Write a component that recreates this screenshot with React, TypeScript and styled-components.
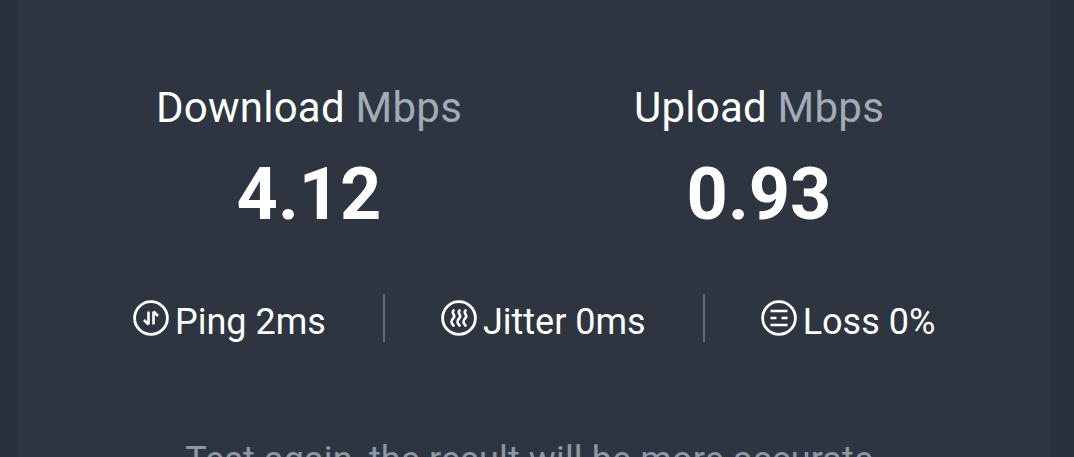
import styled, { createGlobalStyle } from "styled-components";

const GlobalStyle = createGlobalStyle`
  html, body {
    margin: 0;
    padding: 0;
    height: 457px;
    overflow: hidden;
    background: #28323e;
    font-family: "Roboto", "Liberation Sans", sans-serif;
  }
`;

const Page = styled.div`
  width: 1074px;
  height: 457px;
  overflow: hidden;
  background: #28323e;
`;

const Card = styled.section`
  width: 1032px;
  height: 457px;
  margin-left: 18px;
  padding-top: 84px;
  box-sizing: border-box;
  background: #2d3640;
`;

const Speeds = styled.div`
  display: grid;
  grid-template-columns: 450px 450px;
  padding-left: 66px;
`;

const Speed = styled.div`
  display: flex;
  flex-direction: column;
  align-items: center;
`;

const SpeedLabel = styled.div`
  font-size: 42px;
  line-height: 48px;
  letter-spacing: 0.25px;
  color: #ffffff;
  white-space: nowrap;
`;

const Unit = styled.span`
  color: #a3abb7;
`;

const SpeedValue = styled.div`
  margin-top: 21px;
  font-size: 72px;
  line-height: 84px;
  font-weight: 700;
  color: #ffffff;
`;

const Metrics = styled.div`
  display: flex;
  align-items: center;
  gap: 56px;
  margin-top: 57px;
  padding-left: 115px;
`;

const Metric = styled.div`
  display: flex;
  align-items: center;
  gap: 6px;
  height: 48px;
  padding-right: 1px;
  font-size: 36px;
  line-height: 48px;
  color: #ffffff;
  white-space: nowrap;
`;

const MetricText = styled.span`
  padding-top: 8px;
`;

const Divider = styled.div`
  width: 2px;
  height: 48px;
  background: #5f6779;
`;

const Hint = styled.p`
  margin: 96px 0 0;
  text-align: center;
  font-size: 36px;
  line-height: 44px;
  letter-spacing: 0.13px;
  color: #8f97a3;
  white-space: nowrap;
`;

const IconSvg = styled.svg`
  width: 36px;
  height: 36px;
  flex: none;
`;

function PingIcon() {
  return (
    <IconSvg viewBox="0 0 36 36" fill="none" stroke="#fff" strokeWidth="2.8">
      <circle cx="18" cy="18" r="16.4" />
      <path d="M15.500 11.500v13M15.500 24.500l-4.500-4.500M20.500 24.500v-13M20.500 11.500l4.500 4.500" strokeWidth="2.6" />
    </IconSvg>
  );
}

function JitterIcon() {
  return (
    <IconSvg viewBox="0 0 36 36" fill="none" stroke="#fff" strokeWidth="2.8">
      <circle cx="18" cy="18" r="16.4" />
      <path
        d="M12.500 10.500c-3 3 3 4.500 0 7.500s-2.500 5 0 7.500M18.500 10.500c-3 3 3 4.500 0 7.500s-2.500 5 0 7.500M24.500 10.500c-3 3 3 4.500 0 7.500s-2.500 5 0 7.500"
        strokeWidth="2.6"
        strokeLinecap="round"
      />
    </IconSvg>
  );
}

function LossIcon() {
  return (
    <IconSvg viewBox="0 0 36 36" fill="none" stroke="#fff" strokeWidth="2.8">
      <circle cx="18" cy="18" r="16.4" />
      <path d="M9.500 11h17M9.500 18h6M20.500 18h6M9.500 25h17" strokeWidth="2.6" />
    </IconSvg>
  );
}

export default function App() {
  return (
    <Page>
      <GlobalStyle />
      <Card>
        <Speeds>
          <Speed>
            <SpeedLabel>
              Download <Unit>Mbps</Unit>
            </SpeedLabel>
            <SpeedValue>4.12</SpeedValue>
          </Speed>
          <Speed>
            <SpeedLabel>
              Upload <Unit>Mbps</Unit>
            </SpeedLabel>
            <SpeedValue>0.93</SpeedValue>
          </Speed>
        </Speeds>
        <Metrics>
          <Metric>
            <PingIcon />
            <MetricText>Ping 2ms</MetricText>
          </Metric>
          <Divider />
          <Metric>
            <JitterIcon />
            <MetricText>Jitter 0ms</MetricText>
          </Metric>
          <Divider />
          <Metric>
            <LossIcon />
            <MetricText>Loss 0%</MetricText>
          </Metric>
        </Metrics>
        <Hint>Test again, the result will be more accurate.</Hint>
      </Card>
    </Page>
  );
}
